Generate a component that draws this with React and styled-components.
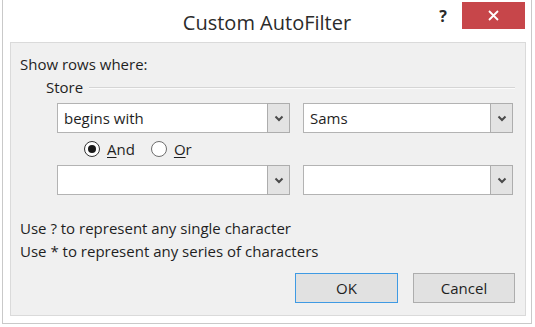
import React from "react";
import styled, { createGlobalStyle } from "styled-components";

const Global = createGlobalStyle`
  html, body { margin: 0; padding: 0; background: #ffffff; }
  body { font-family: "Open Sans", "Noto Sans", sans-serif; color: #1f1f1f; }
  * { box-sizing: border-box; }
`;

const Window = styled.div`
  width: 530px;
  height: 324px;
  margin-left: 2px;
  background: #ffffff;
  border: 1px solid #c9c9c9;
  border-top: none;
  display: flex;
  flex-direction: column;
`;

const TitleBar = styled.div`
  height: 42px;
  display: grid;
  grid-template-columns: 1fr auto 1fr;
  align-items: start;
`;

const Title = styled.div`
  grid-column: 2;
  font-size: 20px;
  line-height: 26px;
  padding-top: 10px;
  color: #2b2b2b;
`;

const Controls = styled.div`
  grid-column: 3;
  justify-self: end;
  display: flex;
  align-items: flex-start;
  padding-top: 2px;
  padding-right: 6px;
`;

const HelpButton = styled.div`
  width: 22px;
  font-weight: 700;
  font-size: 16px;
  line-height: 20px;
  padding-top: 4px;
  color: #2a2a2a;
  text-align: center;
  margin-right: 8px;
`;

const CloseButton = styled.div`
  width: 63px;
  height: 27px;
  background: #c7464a;
  display: flex;
  align-items: center;
  justify-content: center;
`;

const Panel = styled.div`
  margin: 0 5px 0 7px;
  height: 274px;
  background: #f0f0f0;
  border: 1px solid #dadada;
  padding: 11px 10px 0 9px;
  display: flex;
  flex-direction: column;
`;

const Label = styled.div`
  font-size: 15px;
  line-height: 20px;
`;

const Group = styled.div`
  padding-left: 26px;
  display: flex;
  flex-direction: column;
`;

const GroupHeader = styled.div`
  display: flex;
  align-items: center;
  gap: 6px;
  font-size: 15px;
  line-height: 20px;
  margin-top: 3px;
`;

const GroupLine = styled.div`
  flex: 1;
  height: 2px;
  border-top: 1px solid #d5d5d5;
  border-bottom: 1px solid #fbfbfb;
  margin-top: 2px;
`;

const ComboRow = styled.div`
  display: flex;
  gap: 13px;
  padding-left: 37px;
  margin-top: ${(p) => p.$top || 0}px;
`;

const Combo = styled.div`
  width: ${(p) => p.$width}px;
  height: 30px;
  display: flex;
  background: #ffffff;
  border: 1px solid #b3b3b3;
`;

const ComboText = styled.div`
  flex: 1;
  font-size: 15px;
  line-height: 28px;
  padding-left: 6px;
`;

const ComboArrow = styled.div`
  width: 23px;
  margin: -1px -1px -1px 0;
  border: 1px solid #adadad;
  background: #e3e3e3;
  display: flex;
  align-items: center;
  justify-content: center;
`;

const RadioRow = styled.div`
  height: 32px;
  display: flex;
  align-items: center;
  padding-left: 64px;
  gap: 16px;
`;

const RadioOption = styled.label`
  display: flex;
  align-items: center;
  gap: 7px;
  font-size: 15px;
  line-height: 20px;
`;

const RadioCircle = styled.span`
  width: 16px;
  height: 16px;
  border-radius: 50%;
  background: #ffffff;
  border: 1px solid ${(p) => (p.$checked ? "#333333" : "#6e6e6e")};
  display: flex;
  align-items: center;
  justify-content: center;
  &::after {
    content: "";
    width: 8px;
    height: 8px;
    border-radius: 50%;
    background: ${(p) => (p.$checked ? "#1a1a1a" : "transparent")};
  }
`;

const Key = styled.span`
  text-decoration: underline;
  text-underline-offset: 2px;
`;

const Hints = styled.div`
  margin-top: 22px;
  font-size: 15px;
  line-height: 23px;
`;

const Buttons = styled.div`
  display: flex;
  justify-content: flex-end;
  gap: 15px;
  margin-top: 10px;
`;

const Button = styled.div`
  width: ${(p) => p.$width}px;
  height: 30px;
  background: #e1e1e1;
  border: 1px solid ${(p) => (p.$default ? "#3f9ae3" : "#adadad")};
  font-size: 15px;
  line-height: 28px;
  text-align: center;
`;

const Chevron = () => (
  <svg width="10" height="7" viewBox="0 0 10 7">
    <path d="M1.5 1.5 L5 5 L8.5 1.5" fill="none" stroke="#4a4a4a" strokeWidth="2" />
  </svg>
);

const CloseIcon = () => (
  <svg width="11" height="11" viewBox="0 0 11 11">
    <path d="M1 1 L10 10 M10 1 L1 10" stroke="#ffffff" strokeWidth="1.8" />
  </svg>
);

const ComboBox = ({ width, value }) => (
  <Combo $width={width}>
    <ComboText>{value}</ComboText>
    <ComboArrow>
      <Chevron />
    </ComboArrow>
  </Combo>
);

export default function App() {
  return (
    <>
      <Global />
      <Window>
        <TitleBar>
          <Title>Custom AutoFilter</Title>
          <Controls>
            <HelpButton>?</HelpButton>
            <CloseButton>
              <CloseIcon />
            </CloseButton>
          </Controls>
        </TitleBar>
        <Panel>
          <Label>Show rows where:</Label>
          <Group>
            <GroupHeader>
              <span>Store</span>
              <GroupLine />
            </GroupHeader>
          </Group>
          <ComboRow $top={6}>
            <ComboBox width={233} value="begins with" />
            <ComboBox width={210} value="Sams" />
          </ComboRow>
          <RadioRow>
            <RadioOption>
              <RadioCircle $checked />
              <span>
                <Key>A</Key>nd
              </span>
            </RadioOption>
            <RadioOption>
              <RadioCircle />
              <span>
                <Key>O</Key>r
              </span>
            </RadioOption>
          </RadioRow>
          <ComboRow>
            <ComboBox width={233} value="" />
            <ComboBox width={210} value="" />
          </ComboRow>
          <Hints>
            <div>Use ? to represent any single character</div>
            <div>Use * to represent any series of characters</div>
          </Hints>
          <Buttons>
            <Button $width={103} $default>
              OK
            </Button>
            <Button $width={102}>Cancel</Button>
          </Buttons>
        </Panel>
      </Window>
    </>
  );
}
